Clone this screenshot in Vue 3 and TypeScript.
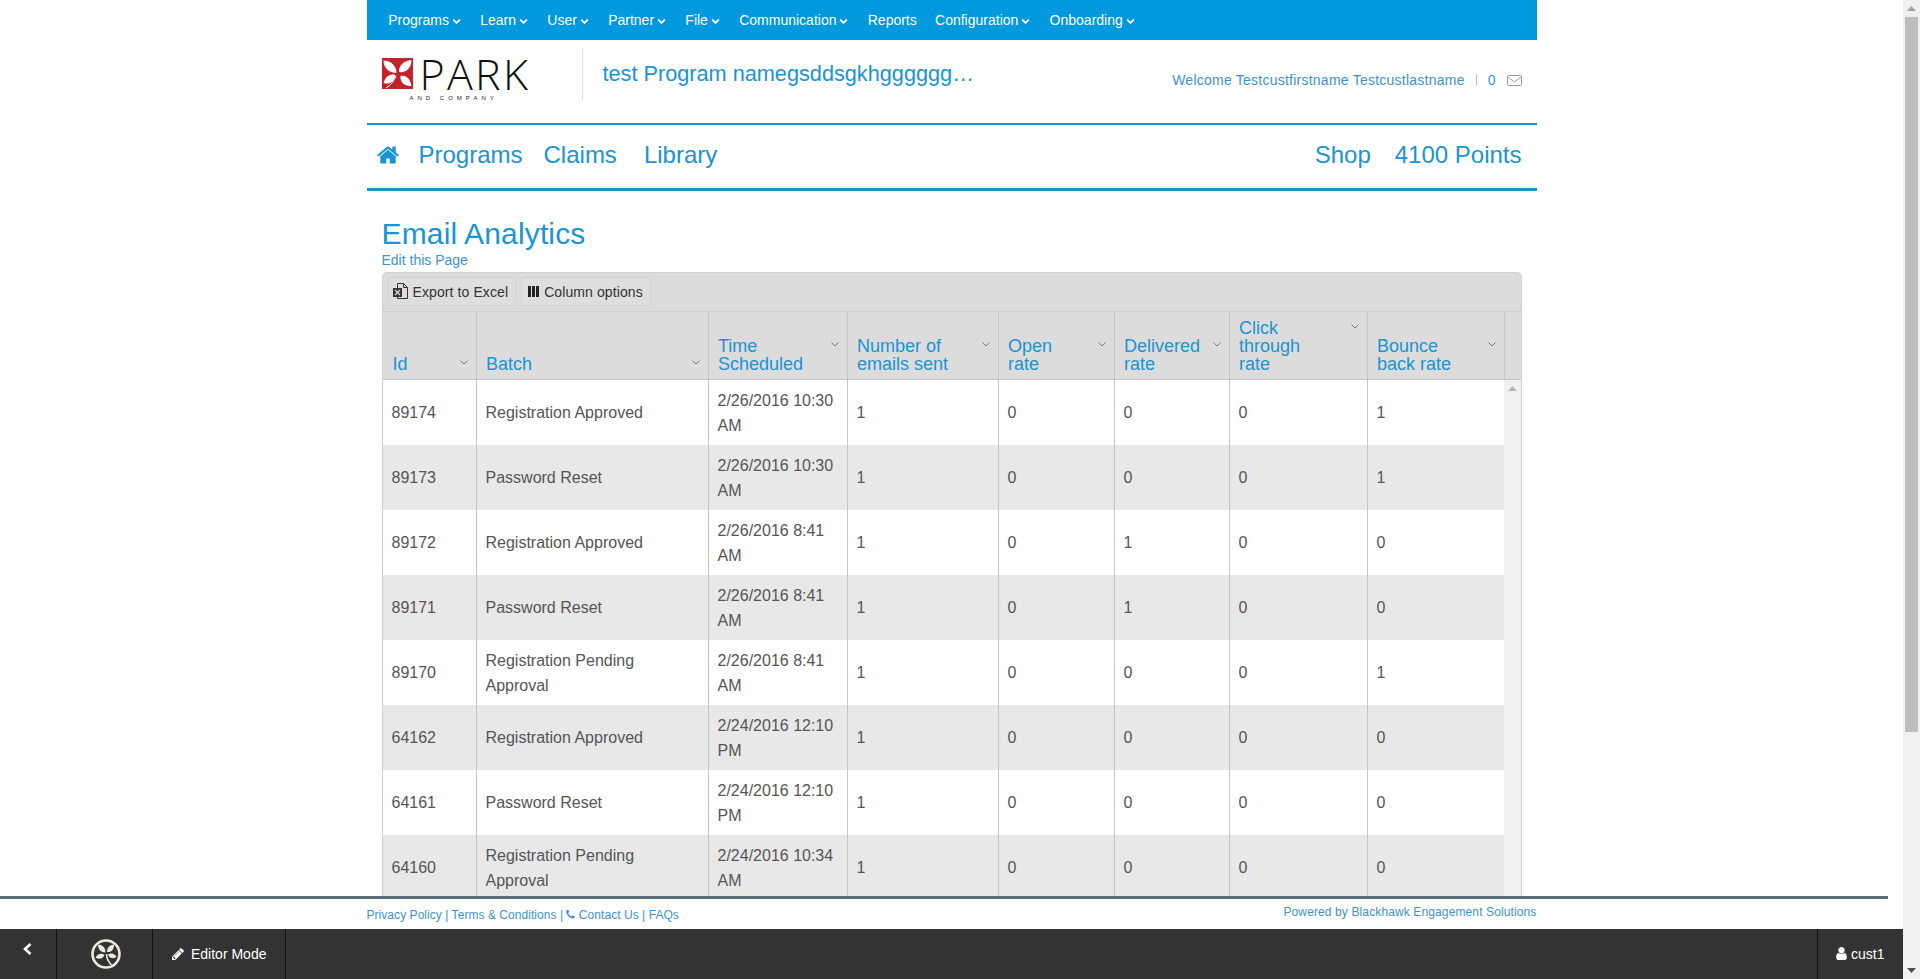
<template>
  <div class="app">
    <div class="main">
      <div class="page">
        <div class="container">
          <nav class="topnav">
            <a v-for="item in topItems" :key="item.label" class="topnav-item">
              {{ item.label }}
              <svg v-if="item.menu" class="topnav-caret" viewBox="0 0 9 7" width="9" height="7">
                <path d="M1.2 1.6 4.500 4.900 7.800 1.600" fill="none" stroke="#fff" stroke-width="1.800" />
              </svg>
            </a>
          </nav>

          <header class="brand">
            <div class="logo">
              <div class="logo-mark">
                <svg viewBox="0 0 31 31" width="31" height="31">
                  <rect width="31" height="31" fill="#c4222b" />
                  <path d="M14.500 15C14.500 8 9 2.500 1.500 2.500 1.500 10 7 15 14.500 15z" fill="#fff" />
                  <path d="M17 14c-.5-6.500 5-11.500 12.500-12 0 8-5.500 13-12.500 12z" fill="#fff" />
                  <path d="M13.500 17C8 15.500 3.500 18.500 1.500 25c6 2 10.500-1 12-8z" fill="#fff" />
                  <path d="M18.500 18c6-1.500 9.500 3 11 10-7 .5-11.500-3.500-11-10z" fill="#fff" />
                  <path d="M6 30c5.500-4.500 9-10 10.500-17" fill="none" stroke="#c4222b" stroke-width="1.200" />
                  <path d="M4 30c5-3 8-7 10-12" fill="none" stroke="#fff" stroke-width="1" />
                </svg>
                <span class="logo-word">PARK</span>
              </div>
              <div class="logo-sub">AND COMPANY</div>
            </div>
            <div class="program-name">test Program namegsddsgkhgggggg…</div>
            <div class="welcome">
              <span class="welcome-name">Welcome Testcustfirstname Testcustlastname</span>
              <span class="welcome-sep"></span>
              <span>0</span>
              <svg class="mail" viewBox="0 0 15 11" width="15" height="11">
                <rect x="0.500" y="0.500" width="14" height="10" rx="1" fill="none" stroke="#9a9a9a" />
                <path d="M1 2l6.500 5L14 2" fill="none" stroke="#9a9a9a" />
              </svg>
            </div>
          </header>

          <nav class="mainnav">
            <svg class="home" viewBox="0 0 1792 1792" width="24" height="24">
              <path fill="#1a94d2" d="M1472 992v480q0 26-19 45t-45 19h-384v-384h-256v384h-384q-26 0-45-19t-19-45v-480q0-1 .5-3t.5-3l575-474 575 474q1 2 1 6zm223-69l-62 74q-8 9-21 11h-3q-13 0-21-7l-692-577-692 577q-12 8-24 7-13-2-21-11l-62-74q-8-10-7-23.500t11-21.500l719-599q32-26 76-26t76 26l244 204v-195q0-14 9-23t23-9h192q14 0 23 9t9 23v408l219 182q10 8 11 21.500t-7 23.500z" />
            </svg>
            <a>Programs</a>
            <a>Claims</a>
            <a class="library">Library</a>
            <a class="shop">Shop</a>
            <a>4100 Points</a>
          </nav>

          <section class="content">
            <h1>Email Analytics</h1>
            <a class="edit-link">Edit this Page</a>

            <div class="grid">
              <div class="toolbar">
                <button type="button" class="tool-btn">
                  <svg viewBox="0 0 15 17" width="15" height="17">
                    <path d="M4.500 5V.500h6l4 4v11h-10V14" fill="none" stroke="#333" />
                    <path d="M10.500.500v4h4" fill="none" stroke="#333" />
                    <rect y="5" width="9" height="9" fill="#333" />
                    <path d="M2 7l5 5M7 7l-5 5" stroke="#ddd" stroke-width="1.300" />
                  </svg>
                  Export to Excel
                </button>
                <button type="button" class="tool-btn">
                  <svg class="cols" viewBox="0 0 11 11" width="11" height="11">
                    <path d="M0 0h3v11H0zM4 0h3v11H4zM8 0h3v11H8z" fill="#222" />
                  </svg>
                  Column options
                </button>
              </div>

              <div class="head">
                <div v-for="col in columns" :key="col" class="head-cell">
                  <div class="head-inner">
                    <span class="head-label">{{ col }}</span>
                    <svg class="head-caret" viewBox="0 0 8 5" width="8" height="5">
                      <path d="M.5.500 4 4 7.500.500" fill="none" stroke="#777" />
                    </svg>
                  </div>
                </div>
                <div class="head-cell head-spacer"></div>
              </div>

              <div class="body">
                <div class="rows">
                  <div v-for="row in rows" :key="row[0]" class="row">
                    <div v-for="(cell, i) in row" :key="i" class="cell">{{ cell }}</div>
                  </div>
                </div>
                <div class="grid-scroll">
                  <svg viewBox="0 0 9 5" width="9" height="5"><path d="M0 5 4.500 0 9 5z" fill="#b5b5b5" /></svg>
                </div>
              </div>
            </div>
          </section>
        </div>
      </div>

      <footer class="footer">
        <div class="footer-inner">
          <div class="footer-links">
            Privacy Policy | Terms &amp; Conditions |
            <svg viewBox="0 0 1792 1792" width="11" height="11">
              <path fill="#3f93cc" d="M1600 1240q0 27-10 70.500t-21 68.500q-21 50-122 106-94 51-186 51-27 0-53-3.500t-57.500-12.500-47-14.500-55.500-20.500-49-18q-98-35-175-83-127-79-264-216t-216-264q-48-77-83-175-3-9-18-49t-20.500-55.500-14.500-47-12.500-57.500-3.500-53q0-92 51-186 56-101 106-122 25-11 68.500-21t70.500-10q14 0 21 3 18 6 53 76 11 19 30 54t35 63.500 31 53.500q3 4 17.500 25t21.500 35.500 7 28.500q0 20-28.500 50t-62 55-62 53-28.500 46q0 9 5 22.500t8.500 20.500 14 24 11.500 19q76 137 174 235t235 174q2 1 19 11.500t24 14 20.500 8.500 22.500 5q18 0 46-28.500t53-62 55-62 50-28.500q14 0 28.500 7t35.500 21.500 25 17.500q25 15 53.500 31t63.500 35 54 30q70 35 76 53 3 7 3 21z" />
            </svg>
            Contact Us | FAQs
          </div>
          <div class="powered">Powered by Blackhawk Engagement Solutions</div>
        </div>
      </footer>

      <div class="editor-bar">
        <div class="bar-section bar-back">
          <svg viewBox="0 0 9 12" width="9" height="12">
            <path d="M7.500 1 2 6l5.500 5" fill="none" stroke="#fff" stroke-width="2.600" />
          </svg>
        </div>
        <div class="bar-section bar-mark">
          <svg viewBox="0 0 30 30" width="30" height="30">
            <circle cx="15" cy="15" r="13.500" fill="none" stroke="#ece9e0" stroke-width="2.600" />
            <path d="M14.500 13.500C14.500 9 12 6 7 5.500c0 5 3 8 7.500 8z" fill="#ece9e0" />
            <path d="M16 13c0-4.500 2.500-7 7-7.500 0 5-2.500 8-7 7.500z" fill="#ece9e0" />
            <path d="M13.500 16c-3-2.500-7-1.500-9 2.500 3.500 2.500 7 1.500 9-2.500z" fill="#ece9e0" />
            <path d="M17 15.500c3.500-2 7-1 8.500 2.500-3.500 2.500-7 1.500-8.500-2.500z" fill="#ece9e0" />
            <path d="M15.500 15c0 4 1 7 5 11" fill="none" stroke="#ece9e0" stroke-width="1.600" />
          </svg>
        </div>
        <div class="bar-section bar-editor">
          <svg viewBox="0 0 1792 1792" width="14" height="14">
            <path fill="#fff" d="M491 1536l91-91-235-235-91 91v107h128v128h107zm523-928q0-22-22-22-10 0-17 7l-542 542q-7 7-7 17 0 22 22 22 10 0 17-7l542-542q7-7 7-17zm-54-192l416 416-832 832h-416v-416zm683 96q0 53-37 90l-166 166-416-416 166-165q36-38 90-38 53 0 91 38l235 234q37 39 37 91z" />
          </svg>
          Editor Mode
        </div>
        <div class="bar-section bar-user">
          <svg viewBox="0 0 1792 1792" width="15" height="15">
            <path fill="#fff" d="M1536 1399q0 109-62.500 187t-150.500 78h-854q-88 0-150.500-78t-62.500-187q0-85 8.500-160.500t31.500-152 58.500-131 94-89 134.500-34.500q131 128 313 128t313-128q76 0 134.500 34.500t94 89 58.500 131 31.500 152 8.500 160.500zm-256-887q0 159-112.500 271.500t-271.500 112.500-271.500-112.500-112.500-271.500 112.500-271.500 271.500-112.500 271.500 112.500 112.500 271.500z" />
          </svg>
          cust1
        </div>
      </div>
    </div>

    <div class="page-scroll">
      <div class="arrow"><svg viewBox="0 0 9 5" width="9" height="5"><path d="M0 5 4.500 0 9 5z" fill="#a3a3a3" /></svg></div>
      <div class="thumb"></div>
      <div class="arrow arrow-end"><svg viewBox="0 0 9 5" width="9" height="5"><path d="M0 0h9L4.500 5z" fill="#505050" /></svg></div>
    </div>
  </div>
</template>

<script setup lang="ts">
interface TopItem { label: string; menu: boolean }

const topItems: TopItem[] = [
  { label: 'Programs', menu: true },
  { label: 'Learn', menu: true },
  { label: 'User', menu: true },
  { label: 'Partner', menu: true },
  { label: 'File', menu: true },
  { label: 'Communication', menu: true },
  { label: 'Reports', menu: false },
  { label: 'Configuration', menu: true },
  { label: 'Onboarding', menu: true },
];

const columns: string[] = [
  'Id',
  'Batch',
  'Time\nScheduled',
  'Number of\nemails sent',
  'Open\nrate',
  'Delivered\nrate',
  'Click\nthrough\nrate',
  'Bounce\nback rate',
];

const rows: string[][] = [
  ['89174', 'Registration Approved', '2/26/2016 10:30 AM', '1', '0', '0', '0', '1'],
  ['89173', 'Password Reset', '2/26/2016 10:30 AM', '1', '0', '0', '0', '1'],
  ['89172', 'Registration Approved', '2/26/2016 8:41 AM', '1', '0', '1', '0', '0'],
  ['89171', 'Password Reset', '2/26/2016 8:41 AM', '1', '0', '1', '0', '0'],
  ['89170', 'Registration Pending Approval', '2/26/2016 8:41 AM', '1', '0', '0', '0', '1'],
  ['64162', 'Registration Approved', '2/24/2016 12:10 PM', '1', '0', '0', '0', '0'],
  ['64161', 'Password Reset', '2/24/2016 12:10 PM', '1', '0', '0', '0', '0'],
  ['64160', 'Registration Pending Approval', '2/24/2016 10:34 AM', '1', '0', '0', '0', '0'],
];
</script>

<style>
html, body { height: 100%; overflow: hidden; background: #fff; }
</style>

<style scoped>
.app {
  display: flex; height: 100vh; overflow: hidden;
  font-family: "Liberation Sans", Arial, sans-serif; font-size: 14px; color: #555;
}
.main { flex: 1; min-width: 0; display: flex; flex-direction: column; }
.page { flex: 1; min-height: 0; overflow: hidden; }
.container { width: 1170px; margin: 0 auto; }

.topnav {
  display: flex; align-items: center; height: 40px; padding-left: 12.6px;
  background: #0099dd; color: #fff;
}
.topnav-item { display: flex; align-items: center; padding: 0 9.15px; white-space: nowrap; }
.topnav-caret { margin-left: 3px; margin-top: 2px; margin-right: 1px; }

.brand { display: flex; height: 83px; padding: 8px 15px 0; box-sizing: border-box; }
.logo { width: 200px; padding-top: 10px; box-sizing: border-box; }
.logo-mark { display: flex; align-items: center; }
.logo-word {
  margin-left: 7px; font-family: "Open Sans", sans-serif; font-size: 43px; font-weight: 300;
  line-height: 31px; letter-spacing: 2.3px; color: #111;
}
.logo-sub {
  margin: 5px 0 0 28px; font-size: 6px; line-height: 8px; letter-spacing: 4px; color: #222;
  white-space: nowrap;
}
.program-name {
  height: 52px; padding: 9px 0 0 20px; box-sizing: border-box; border-left: 1px solid #ddd;
  font-size: 21.7px; line-height: 34px; color: #1a94d2; white-space: nowrap;
}
.welcome {
  display: flex; align-items: center; margin-left: auto; height: 48px;
  margin-top: 8px; color: #3f93cc; white-space: nowrap;
}
.welcome-name { letter-spacing: 0.24px; }
.welcome-sep { width: 1px; height: 12px; margin: 0 11px 0 11px; background: #bbb; }
.mail { margin-left: 11px; }

.mainnav {
  display: flex; align-items: center; height: 60px; padding: 0 15px 3px 9px;
  border-top: 2px solid #1a94cc; border-bottom: 3px solid #1a94cc;
  gap: 21px; font-size: 24px; color: #1a94d2;
}
.home { margin-right: -2px; }
.library { margin-left: 6px; }
.shop { margin-left: auto; margin-right: 3px; }

.content { padding: 26px 15px 0; }
h1 { margin: 0; font-size: 30px; line-height: 33px; font-weight: 400; letter-spacing: 0.15px; color: #1a94d2; }
.edit-link { display: block; line-height: 20px; color: #3f93cc; }

.grid {
  margin-top: 2px; border: 1px solid #d0d0d0; border-bottom: 0; border-radius: 5px 5px 0 0;
  background: #dcdcdc; overflow: hidden;
}
.toolbar { display: flex; gap: 5px; height: 38px; padding: 4px 5px 0; box-sizing: border-box; }
.tool-btn {
  display: flex; align-items: center; gap: 5px; height: 29px; padding: 0 7px 0 4px;
  border: 1px solid #d2d2d2; border-radius: 3px; background: #dedede;
  font: inherit; letter-spacing: 0.1px; color: #333;
}
.tool-btn + .tool-btn { padding-left: 6px; }

.head, .row {
  display: grid;
  grid-template-columns: 93px 232px 139px 151px 116px 115px 138px 137px;
}
.head {
  grid-template-columns: 93px 232px 139px 151px 116px 115px 138px 137px 17px;
  height: 67px; border-top: 1px solid #cfcfcf; border-bottom: 1px solid #c6c6c6;
}
.head-cell {
  display: flex; flex-direction: column; justify-content: flex-end;
  padding: 0 8px 6px 9.5px; box-sizing: border-box; border-left: 1px solid #c6c6c6;
}
.head-cell:first-child { border-left: 0; padding-left: 10px; }
.head-inner { display: flex; justify-content: space-between; align-items: flex-start; }
.head-label { font-size: 18px; line-height: 18px; color: #1a94d2; white-space: pre-line; }
.head-caret { flex: none; margin-top: 5px; }

.body { display: flex; background: #fff; }
.rows { width: 1121px; }
.row { height: 65px; }
.row:nth-child(even) { background: #e8e8e8; }
.cell {
  display: flex; align-items: center; padding: 0 9px; box-sizing: border-box;
  border-left: 1px solid #c6c6c6; font-size: 16px; line-height: 25px; color: #555;
}
.cell:first-child { border-left: 0; }
.grid-scroll { flex: 1; display: flex; justify-content: center; padding-top: 6px; background: #f0f0f0; }
.grid-scroll svg { display: block; }

.footer { flex: none; height: 33px; box-sizing: border-box; background: #fff; }
.footer::before {
  content: ''; display: block; width: calc(100% - 15px); height: 3px; background: #5f6e7b;
}
.footer-inner {
  display: flex; justify-content: space-between; width: 1170px; margin: 0 auto; padding-top: 5px;
  font-size: 12px; line-height: 16px; color: #3f93cc;
}
.footer-links { padding-top: 3px; letter-spacing: 0.05px; }
.footer-links svg { vertical-align: -1px; margin: 0 -1px; }
.powered { letter-spacing: 0.12px; }

.editor-bar { flex: none; display: flex; height: 50px; background: #333; color: #fff; }
.bar-section {
  display: flex; align-items: center; box-sizing: border-box; border-right: 1px solid #111;
  padding-bottom: 1px;
}
.bar-back { width: 57px; padding: 0 0 10px 23px; }
.bar-mark { width: 96px; justify-content: center; padding-left: 3px; }
.bar-editor { width: 133px; gap: 6px; padding-left: 18px; }
.bar-user {
  margin-left: auto; width: 86px; gap: 2px; padding-left: 16px; border-right: 0;
  border-left: 1px solid #111;
}

.page-scroll { flex: none; display: flex; flex-direction: column; width: 17px; background: #f0f0f0; }
.arrow { display: flex; align-items: center; justify-content: center; height: 17px; }
.arrow svg { display: block; }
.arrow-end { margin-top: auto; }
.thumb { height: 715px; margin: 0 2px; background: #bdbdbd; }
</style>
